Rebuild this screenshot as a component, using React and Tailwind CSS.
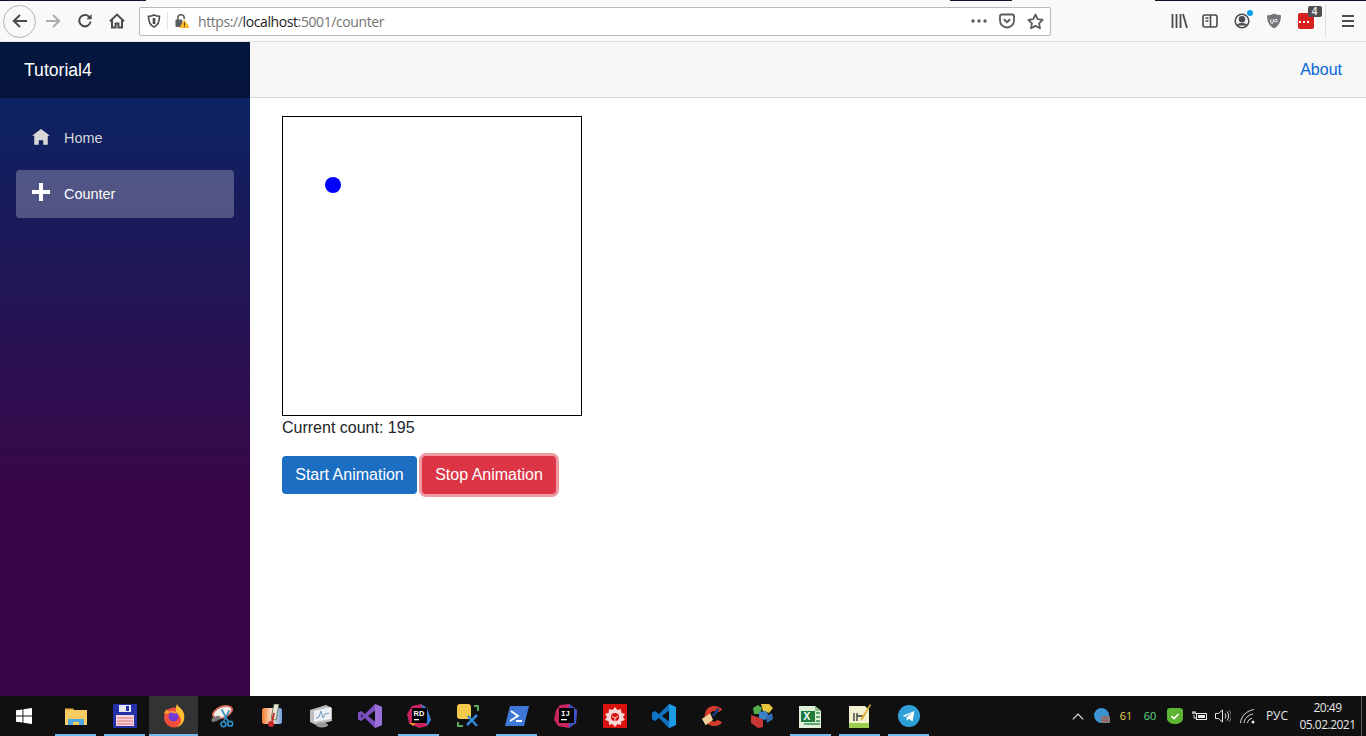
const TASKBAR_GLYPH = "flex h-6 w-6 items-center justify-center";

function Tool({ w = 32, children }) {
  return (
    <div className="flex h-full shrink-0 items-center justify-center" style={{ width: w }}>
      {children}
    </div>
  );
}

function BrowserBar() {
  return (
    <div className="relative flex h-[42px] shrink-0 items-center border-b border-[#e1e1e2] bg-[#f9f9fa] pt-px">
      {/* bit of the window title bar that peeks through on the top row */}
      <div className="absolute left-0 top-0 h-px w-[146px] bg-[#15132b]" />
      <div className="absolute left-[950px] top-0 h-px w-[62px] bg-[#15132b]" />
      <div className="absolute left-[1155px] top-0 h-px w-[211px] bg-[#15132b]" />

      <div className="ml-[3px] flex h-[33px] w-[33px] shrink-0 items-center justify-center rounded-full border border-[#b4b4b6] bg-[#f9f9fa]">
        <svg width="18" height="18" viewBox="0 0 18 18" fill="none" stroke="#4a4a4f" strokeWidth="2">
          <path d="M16 9H3M9 3 2.800 9 9 15" />
        </svg>
      </div>
      <div className="ml-px flex w-[32px] shrink-0 justify-center">
        <svg width="18" height="18" viewBox="0 0 18 18" fill="none" stroke="#adadb0" strokeWidth="2">
          <path d="M2 9h13M9 3l6.200 6L9 15" />
        </svg>
      </div>
      <div className="flex w-[32px] shrink-0 justify-center">
        <svg width="16" height="16" viewBox="0 0 16 16" fill="none" stroke="#4a4a4f" strokeWidth="2">
          <path d="M13.600 8.600A5.700 5.700 0 1 1 12 3.600L14 5.600" />
          <path d="M14.600 1v5.200H9.400" fill="#4a4a4f" stroke="none" />
        </svg>
      </div>
      <div className="flex w-[32px] shrink-0 justify-center">
        <svg width="16" height="16" viewBox="0 0 16 16" fill="none" stroke="#4a4a4f" strokeWidth="2">
          <path d="M1 8.200 8 1.600l7 6.600M3 7v7.600h3.600v-4h2.800v4H13V7" />
        </svg>
      </div>

      <div className="ml-[6px] flex h-[29px] w-[912px] shrink-0 items-center rounded-[2px] border border-[#b9b9bb] bg-white">
        <div className="flex w-[27px] shrink-0 justify-center">
          <svg width="14" height="14" viewBox="0 0 14 14" fill="none" stroke="#4a4a4f" strokeWidth="1.600">
            <path d="M7 1c2 1 3.800 1.300 5.500 1.300C12.500 8 10.500 11.500 7 13 3.500 11.500 1.500 8 1.500 2.300 3.200 2.300 5 2 7 1Z" />
            <path d="M7 4v6" strokeWidth="2.600" />
          </svg>
        </div>
        <div className="h-[18px] w-px shrink-0 bg-[#e3e3e4]" />
        <div className="ml-[6px] flex w-[16px] shrink-0 justify-center">
          <svg width="16" height="16" viewBox="0 0 16 16">
            <path d="M3.800 7V5a3.200 3.200 0 0 1 6.400 0v1" fill="none" stroke="#5d5d62" strokeWidth="1.600" />
            <rect x="1.500" y="6.500" width="7" height="7.500" rx="1" fill="#5d5d62" />
            <path d="M10.500 6.500 15.800 15H5.200Z" fill="#fdb92c" />
            <path d="M10.500 9.500v2.800M10.500 13v1" stroke="#4a3800" strokeWidth="1" />
          </svg>
        </div>
        <div className="ml-[8px] whitespace-nowrap font-['Open_Sans',sans-serif] text-[14px] tracking-[-0.4px] text-[#737373]">
          https://<span className="text-[#1b1b1f]">localhost</span>:5001/counter
        </div>
        <div className="ml-auto flex items-center">
          <div className="flex w-[28px] justify-center">
            <svg width="16" height="4" viewBox="0 0 16 4" fill="#5b5b60">
              <circle cx="2" cy="2" r="1.700" />
              <circle cx="8" cy="2" r="1.700" />
              <circle cx="14" cy="2" r="1.700" />
            </svg>
          </div>
          <div className="flex w-[28px] justify-center">
            <svg width="16" height="16" viewBox="0 0 16 16" fill="none" stroke="#5b5b60" strokeWidth="1.800">
              <path d="M2.500 1.500h11A1.500 1.500 0 0 1 15 3v4.500a7 7 0 0 1-14 0V3a1.500 1.500 0 0 1 1.500-1.500Z" />
              <path d="m4.800 6.200 3.200 3 3.200-3" strokeWidth="2" />
            </svg>
          </div>
          <div className="flex w-[28px] justify-center">
            <svg width="17" height="17" viewBox="0 0 17 17" fill="none" stroke="#5b5b60" strokeWidth="1.800" strokeLinejoin="round">
              <path d="m8.500 1.500 2.200 4.600 5 .7-3.600 3.500.9 5-4.500-2.400L4 15.300l.9-5L1.300 6.800l5-.7Z" />
            </svg>
          </div>
          <div className="w-[1px]" />
        </div>
      </div>

      <div className="ml-[112px] flex h-full items-center">
        <Tool w={32}>
          <svg width="17" height="16" viewBox="0 0 17 16" fill="none" stroke="#4a4a4f" strokeWidth="1.800">
            <path d="M1.500 1v14M5.500 1v14M9.500 1v14M12 1l4 14" />
          </svg>
        </Tool>
        <Tool w={30}>
          <svg width="16" height="14" viewBox="0 0 16 14" fill="none" stroke="#4a4a4f" strokeWidth="1.600">
            <rect x="1" y="1" width="14" height="12" rx="2" />
            <path d="M8.500 1v12" />
            <path d="M3.500 4H6.500M3.500 7H6.500" strokeWidth="1.300" />
          </svg>
        </Tool>
        <Tool w={33}>
          <div className="relative h-[16px] w-[16px]">
            <svg width="16" height="16" viewBox="0 0 16 16" fill="none" stroke="#4a4a4f" strokeWidth="1.500">
              <circle cx="8" cy="8" r="6.800" />
              <circle cx="8" cy="6.300" r="2.500" fill="#4a4a4f" />
              <path d="M3.500 12.500c1-2.500 8-2.500 9 0" fill="#4a4a4f" />
            </svg>
            <div className="absolute -right-[3px] -top-[3px] h-[6px] w-[6px] rounded-full bg-[#0a9dee]" />
          </div>
        </Tool>
        <Tool w={31}>
          <svg width="16" height="16" viewBox="0 0 16 16">
            <path d="M8 .5c2.300 1.200 4.500 1.700 7 1.700 0 6.800-2.500 11-7 13.300C3.500 13.200 1 9 1 2.200 3.500 2.200 5.700 1.700 8 .5Z" fill="#76767a" />
            <path d="M4.700 6v3a1.300 1.300 0 0 0 2.600 0V6M8.700 7.700a1.300 1.300 0 1 0 2.600 0 1.300 1.300 0 1 0-2.600 0" fill="none" stroke="#f1f1f1" strokeWidth="1" />
          </svg>
        </Tool>
        <Tool w={33}>
          <div className="relative h-[16px] w-[16px] rounded-[2px] bg-[#d6201f]">
            <div className="absolute left-[1px] top-[8px] flex gap-[2px]">
              <span className="h-[2px] w-[2px] bg-white" />
              <span className="h-[2px] w-[2px] bg-white" />
              <span className="h-[2px] w-[2px] bg-white" />
            </div>
            <div className="absolute -top-[7px] left-[10px] flex h-[11px] w-[14px] items-center justify-center rounded-[2px] bg-[#4f4f52] font-['Liberation_Sans',sans-serif] text-[10px] font-bold leading-none text-[#e8e8e8]">
              4
            </div>
          </div>
        </Tool>
        <div className="ml-[3px] h-[34px] w-px bg-[#e0e0e1]" />
        <Tool w={43}>
          <svg width="14" height="12" viewBox="0 0 14 12" fill="none" stroke="#4a4a4f" strokeWidth="2">
            <path d="M1 1h12M1 6h12M1 11h12" />
          </svg>
        </Tool>
      </div>
    </div>
  );
}

function Sidebar() {
  return (
    <aside className="flex w-[250px] shrink-0 flex-col bg-[linear-gradient(180deg,#052767_0%,#3a0647_70%)]">
      <div className="flex h-[56px] shrink-0 items-center bg-black/40 pl-6 font-['Liberation_Sans',sans-serif] text-[17.6px] text-white">
        Tutorial4
      </div>
      <nav className="flex flex-col gap-2 px-4 pt-4 font-['Liberation_Sans',sans-serif] text-[14.4px]">
        <a className="flex h-12 items-center rounded px-4 text-[#d7d7d7]">
          <svg width="18" height="18" viewBox="0 0 8 8" fill="#d7d7d7" className="shrink-0">
            <path d="M4 0 0 3h1v4h2V5h2v2h2V3.030L8 3Z" />
          </svg>
          <span className="ml-[14px] pt-[2px]">Home</span>
        </a>
        <a className="flex h-12 items-center rounded bg-white/25 px-4 text-white">
          <svg width="18" height="18" viewBox="0 0 18 18" fill="#fff" className="-mt-[4px] shrink-0">
            <path d="M7 0h4v7h7v4h-7v7H7v-7H0V7h7Z" />
          </svg>
          <span className="ml-[14px] pt-[2px]">Counter</span>
        </a>
      </nav>
    </aside>
  );
}

function Main() {
  return (
    <main className="flex min-w-0 flex-1 flex-col bg-white font-['Liberation_Sans',sans-serif] text-[16px] text-[#212529]">
      <div className="flex h-[56px] shrink-0 items-center justify-end border-b border-[#d6d5d5] bg-[#f7f7f7] pr-6">
        <a className="text-[#0366d6]">About</a>
      </div>
      <div className="px-8 pt-[18px]">
        <div className="relative h-[300px] w-[300px] border border-black bg-white">
          <div className="absolute left-[42px] top-[60px] h-4 w-4 rounded-full bg-[#0000ff]" />
        </div>
        <p className="h-6 leading-6">Current count: 195</p>
        <div className="mt-4 flex gap-[5px]">
          <button className="h-[38px] w-[135px] rounded bg-[#1b6ec2] text-white">Start Animation</button>
          <button className="h-[38px] w-[134px] rounded bg-[#dc3545] text-white shadow-[0_0_0_3px_rgba(220,53,69,0.5)]">
            Stop Animation
          </button>
        </div>
      </div>
    </main>
  );
}

function TaskIcon({ open, active, children }) {
  return (
    <div className={"relative flex h-full w-[49px] shrink-0 items-center justify-center " + (active ? "bg-[#333333]" : "")}>
      <div className={TASKBAR_GLYPH}>{children}</div>
      {open ? <div className={"absolute bottom-0 h-[2px] bg-[#76b9ed] " + (active ? "inset-x-0" : "inset-x-1")} /> : null}
    </div>
  );
}

function Taskbar() {
  return (
    <footer className="flex h-10 shrink-0 items-center bg-[#101010]">
      <div className="flex h-full w-[51px] shrink-0 items-center justify-center pr-[3px]">
        <svg width="16" height="16" viewBox="0 0 16 16" fill="#fff">
          <path d="M0 2.300 6.500 1.400v6.200H0ZM7.400 1.300 16 0v7.600H7.400ZM0 8.400h6.500v6.200L0 13.700ZM7.400 8.400H16V16l-8.600-1.300Z" />
        </svg>
      </div>
      <TaskIcon open>
        <svg width="22" height="20" viewBox="0 0 22 20">
          <path d="M0 2.500h8l2 2.500H0Z" fill="#e8b23a" />
          <rect y="4" width="22" height="15" fill="#f4cc62" />
          <path d="M3 19v-6h16v6h-5v-3H8v3Z" fill="#4fa8e0" />
        </svg>
      </TaskIcon>
      <TaskIcon open>
        <svg width="24" height="24" viewBox="0 0 24 24">
          <rect width="24" height="24" rx="1" fill="#2530a8" />
          <rect x="6" y="1" width="12" height="7" fill="#e6e6ee" />
          <rect x="13" y="2" width="3" height="5" fill="#2530a8" />
          <rect x="3" y="11" width="18" height="11" fill="#f5d6da" />
          <path d="M4 14h16M4 17h16M4 20h16" stroke="#de6d79" />
        </svg>
      </TaskIcon>
      <TaskIcon open active>
        <svg width="24" height="24" viewBox="0 0 24 24">
          <circle cx="12" cy="13.500" r="10" fill="#f0503d" />
          <path d="M15 0c1 3 6 5 7 10 1.500 8-3 12-7 13 4-3 5-7 3-10-1-2-3-3-4-5-.5-3 0-5 1-8Z" fill="#ffbd2f" />
          <path d="M2 9c1-2 2-3 3-4 0 2 2 3 5 3-3 1-6 3-8 1Z" fill="#ff9a30" />
          <circle cx="11.500" cy="12.500" r="5" fill="#6f3bd3" />
          <path d="M7 8c3-2 7-1 8 2-2-1-5-1-8-2Z" fill="#ffa12f" />
        </svg>
      </TaskIcon>
      <TaskIcon>
        <svg width="25" height="24" viewBox="0 0 25 24">
          <ellipse cx="12" cy="8" rx="11.500" ry="6.500" transform="rotate(-22 12 8)" fill="#d9685f" />
          <ellipse cx="12" cy="8" rx="9.500" ry="4.800" transform="rotate(-22 12 8)" fill="#f3efe9" />
          <ellipse cx="5" cy="15" rx="5" ry="2.500" transform="rotate(-22 5 15)" fill="#7a7a7a" />
          <path d="m11 5 7 13M19 6l-6 12" stroke="#2f8fc9" strokeWidth="1.700" />
          <circle cx="13" cy="20.500" r="2.500" fill="none" stroke="#2f8fc9" strokeWidth="1.700" />
          <circle cx="20" cy="20" r="2.500" fill="none" stroke="#2f8fc9" strokeWidth="1.700" />
        </svg>
      </TaskIcon>
      <TaskIcon>
        <svg width="20" height="24" viewBox="0 0 20 24">
          <defs>
            <linearGradient id="thermoBg" x1="0" x2="1" y1="0" y2="0">
              <stop offset="0" stopColor="#ee7a2c" />
              <stop offset="0.5" stopColor="#fbe6d2" />
              <stop offset="1" stopColor="#6f9fe0" />
            </linearGradient>
          </defs>
          <rect y="4" width="20" height="16" rx="2" fill="url(#thermoBg)" />
          <path d="M12 0h5l-3 16-5-1Z" fill="#e8e8dc" stroke="#4c6b3c" strokeWidth="0.800" />
          <path d="m12 9-2 9" stroke="#c92a2a" strokeWidth="2" />
          <circle cx="9" cy="20" r="3" fill="#c92a2a" />
        </svg>
      </TaskIcon>
      <TaskIcon>
        <svg width="24" height="24" viewBox="0 0 24 24">
          <path d="M1 6 17 1l6 3v13L7 21l-6-3Z" fill="#bdbdbd" />
          <path d="M5 7 22 3v12L5 18Z" fill="#eef1f3" />
          <path d="M7 14l3-1 2-6 2 7 2-4 4-1" stroke="#6f9dc4" strokeWidth="1" fill="none" />
          <ellipse cx="13" cy="21" rx="6" ry="2.500" fill="#9a9a9a" />
        </svg>
      </TaskIcon>
      <TaskIcon>
        <svg width="24" height="24" viewBox="0 0 24 24">
          <path d="M17 0 24 3v18l-7 3L7 14l-4 3-3-1.500v-7L3 7l4 3Z" fill="#7d4fc0" />
          <path d="M3 9.700v4.600L5.400 12Z" fill="#2c1a52" />
          <path d="M17 0 24 3v18l-7 3Z" fill="#9a6fd8" />
          <path d="M17 6.500v11L10 12Z" fill="#101010" />
        </svg>
      </TaskIcon>
      <TaskIcon open>
        <svg width="24" height="24" viewBox="0 0 24 24">
          <path d="M5 2 14 0l6 4 4 12-4 6-8 2-10-5-2-9Z" fill="#c9245f" />
          <path d="M14 0l6 4 4 12-4 6Z" fill="#2a7fd6" />
          <path d="M2 19l4 3 3-3Z" fill="#ef8b2b" />
          <rect x="5" y="4" width="15" height="15" fill="#000" />
          <text x="6.500" y="11.500" fontFamily="Liberation Sans, sans-serif" fontSize="7.500" fontWeight="700" fill="#fff">RD</text>
          <rect x="7" y="15" width="5" height="1.300" fill="#fff" />
        </svg>
      </TaskIcon>
      <TaskIcon>
        <svg width="24" height="24" viewBox="0 0 24 24">
          <path d="M1 8V3a3 3 0 0 1 3-3h8a3 3 0 0 1 3 3v12H4a3 3 0 0 1-3-3Z" fill="#f5c94a" />
          <path d="M18 2h4v5M2 18v4h5" stroke="#52a852" strokeWidth="2" fill="none" />
          <path d="m11 21 10-10M12 12l9 10" stroke="#2e88d6" strokeWidth="2.500" />
        </svg>
      </TaskIcon>
      <TaskIcon open>
        <svg width="24" height="20" viewBox="0 0 24 20">
          <path d="M5 0h19l-5 20H0Z" fill="#3f78d6" />
          <path d="m6 5 7 5-8 5M11 15h6" fill="none" stroke="#fff" strokeWidth="1.800" />
        </svg>
      </TaskIcon>
      <TaskIcon>
        <svg width="24" height="24" viewBox="0 0 24 24">
          <path d="M6 1 15 0l8 6-1 13-7 5-11-2-4-6 2-10Z" fill="#c9245f" />
          <path d="M15 0l8 6-1 13-7 5Z" fill="#3a55c8" />
          <rect x="5" y="4" width="15" height="15" fill="#000" />
          <text x="7" y="11.500" fontFamily="Liberation Mono, monospace" fontSize="7.500" fontWeight="700" fill="#fff">IJ</text>
          <rect x="7" y="15" width="6" height="1.300" fill="#fff" />
        </svg>
      </TaskIcon>
      <TaskIcon>
        <svg width="24" height="24" viewBox="0 0 24 24">
          <rect width="24" height="24" fill="#d9120f" />
          <path d="m12 3 2.500 3 3.500-1 .3 3.700L22 10l-2 3 2 3-3.700 1.300-.3 3.700-3.500-1-2.500 3-2.500-3-3.500 1-.3-3.700L2 16l2-3-2-3 3.700-1.300L6 5l3.500 1Z" fill="#f7d6d6" />
          <circle cx="12" cy="13" r="4" fill="#d9120f" />
          <path d="M9 12l3 2 3-2M12 14v3" stroke="#f7d6d6" fill="none" />
        </svg>
      </TaskIcon>
      <TaskIcon>
        <svg width="24" height="24" viewBox="0 0 24 24">
          <path d="M17 0 24 3v18l-7 3L7 14l-4 3-3-1.800v-6.400L3 7l4 3Z" fill="#0f73c2" />
          <path d="M17 0 24 3v18l-7 3Z" fill="#1c9be6" />
          <path d="M17 6.500v11L10 12Z" fill="#101010" />
        </svg>
      </TaskIcon>
      <TaskIcon>
        <svg width="26" height="24" viewBox="0 0 26 24">
          <path d="M23 5C20 1 13 0 8 3 3 7 3 15 7 20c4 4 12 4 16-1l-5-3c-2 2-5 3-7 1-3-2-2-8 1-10 3-1 5 0 7 1Z" fill="#d43b2b" />
          <path d="M19 4 13 12" stroke="#1d3d7a" strokeWidth="3" />
          <path d="M10 9 1 15l4 7 8-6Z" fill="#eccf99" />
        </svg>
      </TaskIcon>
      <TaskIcon>
        <svg width="24" height="24" viewBox="0 0 24 24">
          <path d="M1 11 13 15v8L8 24 1 19Z" fill="#c93636" />
          <path d="M3 4l5-3 4 3-2 6-6 0Z" fill="#4fae48" />
          <path d="M11 0h8l4 4-4 5-6-2Z" fill="#e9c43e" />
          <path d="M9 8l7-1 3 5-4 4-6-2Z" fill="#3a84c9" />
          <path d="M16 12l6-3 1 6-6 4Z" fill="#2f6db0" />
        </svg>
      </TaskIcon>
      <TaskIcon open>
        <svg width="24" height="24" viewBox="0 0 24 24">
          <path d="M0 2h16l6 5v17H0Z" fill="#dff0d8" />
          <path d="M16 2v5h6Z" fill="#8abf83" />
          <rect x="2" y="7" width="14" height="11" fill="#1f7a3e" />
          <text x="4.500" y="16" fontFamily="Liberation Sans, sans-serif" fontSize="10" fontWeight="700" fill="#fff">X</text>
          <path d="M17 9h4M17 13h4M17 17h4M5 20h16" stroke="#2f8f4e" strokeWidth="1.500" />
        </svg>
      </TaskIcon>
      <TaskIcon open>
        <svg width="22" height="24" viewBox="0 0 22 24">
          <path d="M0 2h16l4 4v18H0Z" fill="#f3f1cf" />
          <rect y="19" width="20" height="5" fill="#9ccc4e" />
          <path d="M5 9v8M8 9v8M8 12h7" stroke="#333" strokeWidth="1.300" fill="none" />
          <path d="M21 0l-9 14-1 3 3-2 8-14Z" fill="#e5b33e" />
        </svg>
      </TaskIcon>
      <TaskIcon open>
        <svg width="22" height="22" viewBox="0 0 22 22">
          <circle cx="11" cy="11" r="11" fill="#2f9fd8" />
          <path d="M4.500 10.700 16.500 6l-2 10.500-3.700-2.700-2 1.900-.3-3.200 5.700-5.200-7 4.400Z" fill="#fff" />
        </svg>
      </TaskIcon>

      <div className="ml-auto flex h-full items-center font-['Open_Sans',sans-serif] text-[12px] text-[#e6e6e6]">
        <div className="flex w-6 justify-center">
          <svg width="12" height="7" viewBox="0 0 12 7" fill="none" stroke="#e6e6e6" strokeWidth="1.200">
            <path d="m.8 6.300 5.200-5.300 5.200 5.300" />
          </svg>
        </div>
        <div className="flex w-6 justify-center">
          <svg width="16" height="16" viewBox="0 0 16 16">
            <circle cx="7.500" cy="7.500" r="7.500" fill="#3d93d1" />
            <rect x="7" y="8" width="9" height="7" rx="1" fill="#7d7d7d" />
            <path d="M8.500 10h6M8.500 12.500h6" stroke="#c04a4a" strokeWidth="0.800" />
          </svg>
        </div>
        <div className="w-6 text-center text-[11px] text-[#e8d44d]">61</div>
        <div className="w-6 text-center text-[11px] text-[#62d98a]">60</div>
        <div className="ml-px flex w-6 justify-center">
          <svg width="16" height="16" viewBox="0 0 16 16" fill="none">
            <path d="M3 0h10a3 3 0 0 1 3 3v7c0 4-4 6-8 6s-8-2-8-6V3a3 3 0 0 1 3-3Z" fill="#5db531" />
            <path d="m4.500 8 2.500 2.500 4.500-4.500" stroke="#fff" strokeWidth="1.600" />
          </svg>
        </div>
        <div className="flex w-6 justify-center">
          <svg width="17" height="12" viewBox="0 0 17 12" fill="none" stroke="#e6e6e6">
            <rect x="5.500" y="3.500" width="10" height="6" />
            <rect x="7" y="5" width="7" height="3" fill="#e6e6e6" stroke="none" />
            <path d="M1 3h4M2 1v3M4 1v3M3 5v3h2" strokeWidth="1" />
          </svg>
        </div>
        <div className="flex w-6 justify-center">
          <svg width="16" height="14" viewBox="0 0 16 14" fill="none" stroke="#e6e6e6">
            <path d="M.5 4.500h3L7.500 1v12L3.500 9.500h-3Z" />
            <path d="M10 4.500a4 4 0 0 1 0 5M12 2.500a7 7 0 0 1 0 9" />
            <path d="M14 1a10 10 0 0 1 0 12" stroke="#777" />
          </svg>
        </div>
        <div className="ml-px flex w-6 justify-center">
          <svg width="16" height="15" viewBox="0 0 16 15" fill="none" stroke="#d8d8d8">
            <path d="M.5 14C1 7 7 1.500 14 .5M4 14c.5-4.500 4-8 9-9M7.500 14c.2-2.500 2-4 4.500-4.700" />
            <circle cx="13" cy="13" r="1.500" fill="#e6e6e6" stroke="none" />
          </svg>
        </div>
        <div className="w-[34px] text-center">РУС</div>
        <div className="flex w-[67px] flex-col items-center text-[12px] leading-[17px] tracking-[-0.5px]">
          <span>20:49</span>
          <span>05.02.2021</span>
        </div>
        <div className="h-full w-px bg-[#5a5a5a]" />
        <div className="w-1" />
      </div>
    </footer>
  );
}

export default function App() {
  return (
    <div className="flex h-[736px] w-[1366px] flex-col overflow-hidden">
      <BrowserBar />
      <div className="flex min-h-0 flex-1">
        <Sidebar />
        <Main />
      </div>
      <Taskbar />
    </div>
  );
}
